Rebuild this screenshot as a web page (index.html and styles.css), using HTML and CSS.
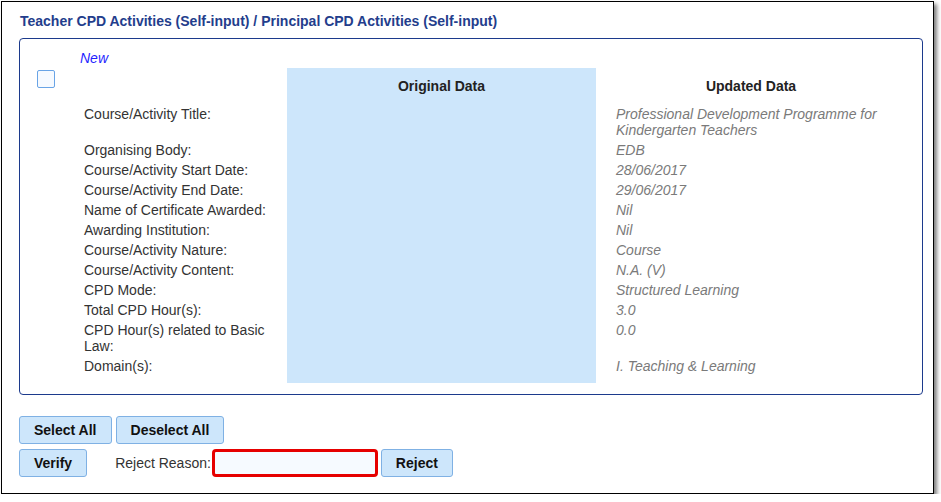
FILE: index.html
```html
<!DOCTYPE html>
<html>
<head>
<meta charset="utf-8">
<link rel="stylesheet" href="styles.css">
</head>
<body>
<div class="frame">
  <div class="title">Teacher CPD Activities (Self-input) / Principal CPD Activities (Self-input)</div>
  <div class="box">
    <div class="grid">
      <div class="c"></div><div class="c new">New</div><div class="c"></div><div class="c"></div>

      <div class="c chk"><span class="checkbox"></span></div>
      <div class="c"></div>
      <div class="c orig head">Original Data</div>
      <div class="c head">Updated Data</div>

      <div class="c"></div><div class="c lbl">Course/Activity Title:</div><div class="c orig"></div><div class="c val">Professional Development Programme for Kindergarten Teachers</div>
      <div class="c"></div><div class="c lbl">Organising Body:</div><div class="c orig"></div><div class="c val">EDB</div>
      <div class="c"></div><div class="c lbl">Course/Activity Start Date:</div><div class="c orig"></div><div class="c val">28/06/2017</div>
      <div class="c"></div><div class="c lbl">Course/Activity End Date:</div><div class="c orig"></div><div class="c val">29/06/2017</div>
      <div class="c"></div><div class="c lbl">Name of Certificate Awarded:</div><div class="c orig"></div><div class="c val">Nil</div>
      <div class="c"></div><div class="c lbl">Awarding Institution:</div><div class="c orig"></div><div class="c val">Nil</div>
      <div class="c"></div><div class="c lbl">Course/Activity Nature:</div><div class="c orig"></div><div class="c val">Course</div>
      <div class="c"></div><div class="c lbl">Course/Activity Content:</div><div class="c orig"></div><div class="c val">N.A. (V)</div>
      <div class="c"></div><div class="c lbl">CPD Mode:</div><div class="c orig"></div><div class="c val">Structured Learning</div>
      <div class="c"></div><div class="c lbl">Total CPD Hour(s):</div><div class="c orig"></div><div class="c val">3.0</div>
      <div class="c"></div><div class="c lbl">CPD Hour(s) related to Basic Law:</div><div class="c orig"></div><div class="c val">0.0</div>
      <div class="c"></div><div class="c lbl">Domain(s):</div><div class="c orig"></div><div class="c val">I. Teaching &amp; Learning</div>

      <div class="c sp"></div><div class="c sp"></div><div class="c sp orig"></div><div class="c sp"></div>
    </div>
  </div>
  <div class="actions">
    <div class="btnrow">
      <button class="btn">Select All</button>
      <button class="btn">Deselect All</button>
    </div>
    <div class="btnrow">
      <button class="btn">Verify</button>
      <span class="reason">Reject Reason:</span>
      <input class="reason-input" type="text">
      <button class="btn btn-reject">Reject</button>
    </div>
  </div>
</div>
</body>
</html>
```

FILE: styles.css
```css
html, body {
  margin: 0;
  padding: 0;
  background: #fff;
}
body {
  font-family: "Liberation Sans", Arial, sans-serif;
  font-size: 14px;
}
.frame {
  box-sizing: border-box;
  width: 933px;
  height: 493px;
  margin: 1px 0 0 1px;
  border: 1px solid #000;
  background: #fff;
  box-shadow: 3px 3px 4px rgba(0, 0, 0, 0.5);
  padding: 11px 0 0 17px;
}
.title {
  margin-left: 1px;
  font-weight: bold;
  color: #233d8c;
  line-height: 17px;
}
.box {
  box-sizing: border-box;
  width: 904px;
  margin-top: 8px;
  border: 1px solid #1c3a8c;
  border-radius: 4px;
  padding: 9px 0 11px 0;
}
.grid {
  display: grid;
  grid-template-columns: 60px 207px 309px 310px;
}
.c {
  line-height: 16px;
}
.new {
  padding: 2px 0;
  font-style: italic;
  color: #1f1fff;
}
.chk {
  padding: 2px 0 0 17px;
}
.checkbox {
  display: block;
  box-sizing: border-box;
  width: 18px;
  height: 18px;
  border: 1px solid #69a4e6;
  border-radius: 2px;
  background: #f6faff;
}
.orig {
  background: #cde6fb;
}
.head {
  padding: 10px 0;
  font-weight: bold;
  color: #222;
  text-align: center;
}
.lbl {
  padding: 2px 4px;
  color: #333;
}
.val {
  padding: 2px 20px;
  font-style: italic;
  color: #7a7a7a;
}
.sp {
  height: 7px;
}
.actions {
  margin-top: 21px;
  display: flex;
  flex-direction: column;
  gap: 5px;
}
.btnrow {
  display: flex;
  align-items: center;
  gap: 4px;
}
.btn {
  box-sizing: border-box;
  height: 28px;
  padding: 0 14px;
  border: 1px solid #7fb1e4;
  border-radius: 3px;
  background: #cde6fb;
  font-family: "Liberation Sans", Arial, sans-serif;
  font-size: 14px;
  font-weight: bold;
  color: #111;
}
.reason {
  margin-left: 24px;
  color: #333;
}
.reason-input {
  box-sizing: border-box;
  width: 166px;
  height: 28px;
  margin: 0 0 0 -3px;
  border: 3px solid #e60000;
  border-radius: 4px;
  background: #f6faff;
  outline: none;
}
.btn-reject {
  margin-left: -1px;
}
```
